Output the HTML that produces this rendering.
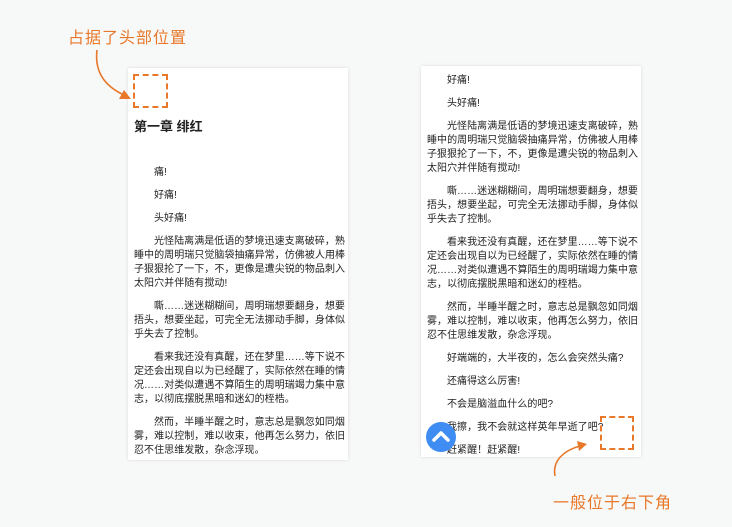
<!DOCTYPE html>
<html><head><meta charset="utf-8"><style>
body{margin:0;width:732px;height:527px;background:#f7f8f8;position:relative;overflow:hidden;font-family:"Liberation Sans","Noto Sans CJK SC",sans-serif;color:#222}
.card{position:absolute;background:#fff;box-shadow:0 0 3px rgba(0,0,0,.12);overflow:hidden}
.txt{position:absolute;font-size:10px;line-height:14px;letter-spacing:0.05px}
.txt p{margin:0 0 9px;text-indent:2em}
.dash{position:absolute;border:2px dashed #e8782a;box-sizing:border-box}
.note{position:absolute;color:#e8782a;font-family:"WenQuanYi Zen Hei","Noto Sans CJK SC",sans-serif;font-size:16px;letter-spacing:1px}
</style></head><body>
<div class="card" style="left:128px;top:68px;width:220px;height:392px">
 <div class="dash" style="left:5px;top:6px;width:35px;height:34px"></div>
 <div style="position:absolute;left:6px;top:48px;font-size:13px;font-weight:bold">第一章 绯红</div>
 <div class="txt" style="left:6px;top:98px;width:212px">
  <p>痛!</p><p>好痛!</p><p>头好痛!</p>
  <p>光怪陆离满是低语的梦境迅速支离破碎，熟睡中的周明瑞只觉脑袋抽痛异常，仿佛被人用棒子狠狠抡了一下，不，更像是遭尖锐的物品刺入太阳穴并伴随有搅动!</p>
  <p>嘶……迷迷糊糊间，周明瑞想要翻身，想要捂头，想要坐起，可完全无法挪动手脚，身体似乎失去了控制。</p>
  <p>看来我还没有真醒，还在梦里……等下说不定还会出现自以为已经醒了，实际依然在睡的情况……对类似遭遇不算陌生的周明瑞竭力集中意志，以彻底摆脱黑暗和迷幻的桎梏。</p>
  <p>然而，半睡半醒之时，意志总是飘忽如同烟雾，难以控制，难以收束，他再怎么努力，依旧忍不住思维发散，杂念浮现。</p>
 </div>
</div>
<div class="card" style="left:421px;top:66px;width:220px;height:391px">
 <div class="txt" style="left:6px;top:8px;width:212px">
  <p>好痛!</p><p>头好痛!</p>
  <p>光怪陆离满是低语的梦境迅速支离破碎，熟睡中的周明瑞只觉脑袋抽痛异常，仿佛被人用棒子狠狠抡了一下，不，更像是遭尖锐的物品刺入太阳穴并伴随有搅动!</p>
  <p>嘶……迷迷糊糊间，周明瑞想要翻身，想要捂头，想要坐起，可完全无法挪动手脚，身体似乎失去了控制。</p>
  <p>看来我还没有真醒，还在梦里……等下说不定还会出现自以为已经醒了，实际依然在睡的情况……对类似遭遇不算陌生的周明瑞竭力集中意志，以彻底摆脱黑暗和迷幻的桎梏。</p>
  <p>然而，半睡半醒之时，意志总是飘忽如同烟雾，难以控制，难以收束，他再怎么努力，依旧忍不住思维发散，杂念浮现。</p>
  <p>好端端的，大半夜的，怎么会突然头痛?</p>
  <p>还痛得这么厉害!</p>
  <p>不会是脑溢血什么的吧?</p>
  <p>我擦，我不会就这样英年早逝了吧?</p>
  <p>赶紧醒！赶紧醒!</p>
 </div>
 <div class="dash" style="left:179px;top:350px;width:34px;height:34px"></div>
</div>
<div style="position:absolute;left:426px;top:422px;width:30px;height:30px;border-radius:50%;background:#3f8cf2"></div>
<svg style="position:absolute;left:0;top:0" width="732" height="527">
 <path d="M434 440 L441 433 L448 440" fill="none" stroke="#fff" stroke-width="3.5" stroke-linecap="round" stroke-linejoin="round"/>
 <path d="M97 50 C94 75 108 88 126 96" fill="none" stroke="#e8782a" stroke-width="1.6"/>
 <path d="M131 99 L119 99 L124 90 Z" fill="#e8782a"/>
 <path d="M555 476 C552 460 565 450 580 446" fill="none" stroke="#e8782a" stroke-width="1.6"/>
 <path d="M587 444 L577 441 L579 451 Z" fill="#e8782a"/>
</svg>
<div class="note" style="left:68px;top:24px">占据了头部位置</div>
<div class="note" style="left:553px;top:489px">一般位于右下角</div>
</body></html>
